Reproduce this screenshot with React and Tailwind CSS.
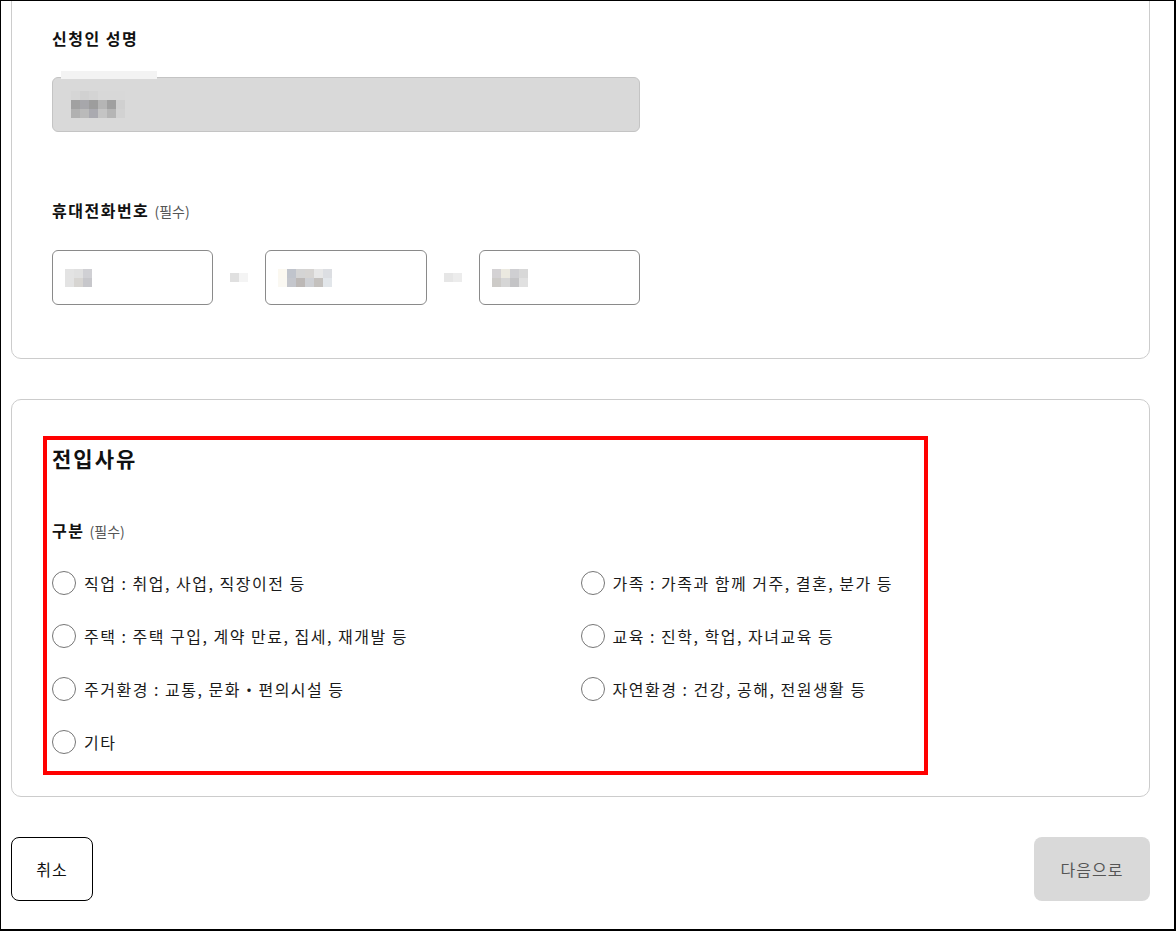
import { useState } from "react"

const font = { fontFamily: '"Noto Sans CJK KR", "Noto Sans", sans-serif' }

const reasons = [
  "직업 : 취업, 사업, 직장이전 등",
  "가족 : 가족과 함께 거주, 결혼, 분가 등",
  "주택 : 주택 구입, 계약 만료, 집세, 재개발 등",
  "교육 : 진학, 학업, 자녀교육 등",
  "주거환경 : 교통, 문화・편의시설 등",
  "자연환경 : 건강, 공해, 전원생활 등",
  "기타",
]

// blurred values, drawn as little mosaic squares
function Mosaic({ rows }) {
  return (
    <div className="flex flex-col">
      {rows.map((row, i) => (
        <div key={i} className="flex">
          {row.map((c, j) => (
            <div key={j} className="h-[9px] w-[9px]" style={{ background: c }} />
          ))}
        </div>
      ))}
    </div>
  )
}

function PhoneBox({ rows }) {
  return (
    <div className="flex h-[55px] flex-1 items-center rounded-md border border-[#8a8a8a] bg-white pl-[12px]">
      <Mosaic rows={rows} />
    </div>
  )
}

function Radio({ label, checked, onClick }) {
  return (
    <button type="button" onClick={onClick} className="flex h-[26px] items-center gap-[8px] text-left">
      <span className="flex h-[24px] w-[24px] shrink-0 items-center justify-center rounded-full border border-[#767676] bg-white">
        {checked ? <span className="h-[12px] w-[12px] rounded-full bg-[#333]" /> : null}
      </span>
      <span className="text-[16px] tracking-[1.5px] text-[#1a1a1a]">{label}</span>
    </button>
  )
}

export default function App() {
  const [reason, setReason] = useState(null)

  return (
    <div
      className="h-[931px] w-[1176px] overflow-hidden border-t border-l border-r-2 border-b-2 border-black bg-white"
      style={font}
    >
      <div className="mt-[-16px] pl-[10px] pr-[24px]">
        <section className="rounded-[10px] border border-[#cccccc] px-[40px] pt-[40px] pb-[53px]">
          <p className="text-[16px] leading-[24px] font-bold tracking-[1.5px] text-[#111]">신청인 성명</p>
          <div className="relative mt-[27px] flex h-[55px] w-[588px] items-center rounded-md border border-[#c4c4c4] bg-[#d9d9d9] pl-[18px]">
            <div className="absolute left-[8px] top-[-7px] h-[8px] w-[96px] bg-[#f3f3f3]" />
            <Mosaic
              rows={[
                ["#d6d6d6", "#d1d1d1", "#d4d4d4", "#d8d8d8", "#d8d8d8", "#d8d8d8"],
                ["#a1a1a1", "#a7a7ab", "#9d9d9d", "#b5b5b5", "#a0a0a0", "#d0d0d0"],
                ["#b1b1b1", "#bababa", "#aaaab0", "#c4c4c4", "#b5b5b5", "#d2d2d2"],
              ]}
            />
          </div>

          <p className="mt-[66px] text-[16px] leading-[24px] font-bold tracking-[1.5px] text-[#111]">
            휴대전화번호 <span className="text-[14px] font-normal tracking-normal text-[#555]">(필수)</span>
          </p>
          <div className="mt-[27px] flex w-[588px] items-center gap-[17px]">
            <PhoneBox
              rows={[
                ["#e3e3e3", "#e0e0e0", "#d0d0d4"],
                ["#e3e3e3", "#d7d5d2", "#c7c7cb"],
              ]}
            />
            <div className="flex w-[18px]">
              <div className="h-[9px] w-[9px] bg-[#e0e0e0]" />
              <div className="h-[9px] w-[9px] bg-[#f4f4f4]" />
            </div>
            <PhoneBox
              rows={[
                ["#fbf8f0", "#c0c4cc", "#d4d4d4", "#d6d4d2", "#e7e7e7", "#dcdee2"],
                ["#faf8f2", "#c4c6cc", "#bcb8b6", "#ced0d4", "#c4c1be", "#e2e6ea"],
              ]}
            />
            <div className="flex w-[18px]">
              <div className="h-[9px] w-[9px] bg-[#e6e6e6]" />
              <div className="h-[9px] w-[9px] bg-[#ececec]" />
            </div>
            <PhoneBox
              rows={[
                ["#d4d2d4", "#ebe9e0", "#cfcfd2", "#d8d8d8"],
                ["#cdcbc8", "#d6d6d6", "#c4c4c6", "#e0e0e0"],
              ]}
            />
          </div>
        </section>

        <section className="relative mt-[40px] rounded-[10px] border border-[#cccccc] px-[40px] pt-[40px] pb-[41px]">
          <h2 className="text-[21px] leading-[36px] font-bold tracking-[2px] text-[#111]">전입사유</h2>
          <p className="mt-[42px] text-[16px] leading-[24px] font-bold tracking-[1.5px] text-[#111]">
            구분 <span className="text-[14px] font-normal tracking-normal text-[#555]">(필수)</span>
          </p>
          <div className="mt-[27px] grid grid-cols-2 gap-y-[27px]">
            {reasons.map((r) => (
              <Radio key={r} label={r} checked={reason === r} onClick={() => setReason(r)} />
            ))}
          </div>
          <div className="pointer-events-none absolute left-[31px] top-[36px] h-[339px] w-[885px] border-4 border-[#ff0000]" />
        </section>

        <div className="mt-[40px] flex items-center justify-between">
          <button
            type="button"
            className="h-[64px] w-[82px] rounded-lg border border-black bg-white text-[16px] tracking-[1px] text-[#111]"
          >
            취소
          </button>
          <button
            type="button"
            className="h-[64px] w-[116px] rounded-lg bg-[#d9d9d9] text-[16px] tracking-[1px] text-[#555]"
          >
            다음으로
          </button>
        </div>
      </div>
    </div>
  )
}
